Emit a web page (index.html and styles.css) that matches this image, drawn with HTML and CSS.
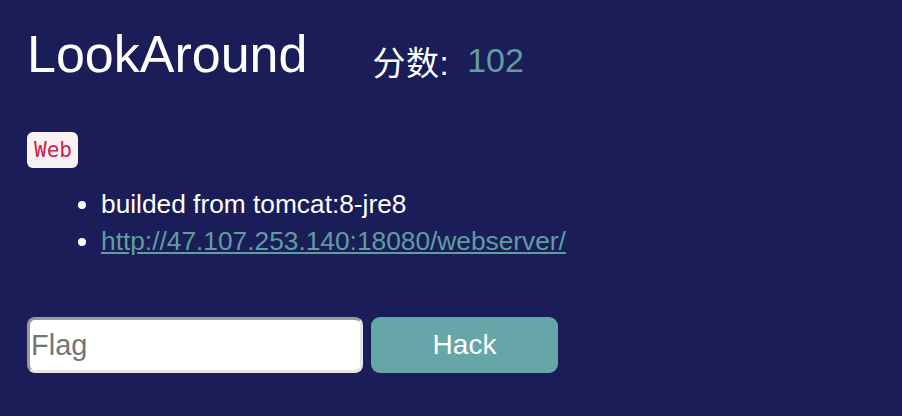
FILE: index.html
```html
<!DOCTYPE html>
<html>
<head>
<meta charset="utf-8">
<link rel="stylesheet" href="styles.css">
</head>
<body>
<div class="page">
  <div class="header">
    <h1 class="title">LookAround</h1>
    <div class="score"><span class="score-label">分数:</span><span class="score-value">102</span></div>
  </div>
  <div class="tags"><code class="tag">Web</code></div>
  <ul class="info">
    <li>builded from tomcat:8-jre8</li>
    <li><a href="#" class="link">http://47.107.253.140:18080/webserver/</a></li>
  </ul>
  <form class="flag-form">
    <input class="flag-input" type="text" placeholder="Flag">
    <button class="hack-btn" type="button">Hack</button>
  </form>
</div>
</body>
</html>
```

FILE: styles.css
```css
html, body {
  margin: 0;
  padding: 0;
  background: #1a1d57;
  height: 100%;
}
body {
  font-family: "Liberation Sans", Arial, "Noto Sans CJK SC", sans-serif;
  color: #ffffff;
}
.page {
  padding: 22px 27px 20px;
}
.header {
  display: flex;
  align-items: baseline;
  gap: 65px;
  height: 72px;
}
.title {
  margin: 0;
  font-weight: normal;
  font-size: 52px;
  line-height: 64px;
}
.score {
  font-size: 33px;
}
.score-label {
  font-family: "Liberation Sans", "Noto Sans CJK SC", sans-serif;
  font-size: 33px;
  letter-spacing: 0.5px;
  vertical-align: -3px;
  margin-right: 18px;
}
.score-value {
  color: #5f9ea0;
  font-size: 34px;
}
.tags {
  margin-top: 38px;
}
.tag {
  display: inline-block;
  font-family: "DejaVu Sans Mono", monospace;
  font-size: 21px;
  line-height: 24px;
  color: #c7254e;
  background: #f9f2f4;
  border-radius: 6px;
  padding: 6px 6px 6px 7px;
}
.info {
  margin: 18px 0 0 0;
  padding-left: 74px;
  font-size: 26.3px;
  line-height: 37px;
}
.link {
  color: #5f9ea0;
  text-decoration: underline;
}
.flag-form {
  display: flex;
  gap: 8px;
  margin-top: 57px;
}
.flag-input {
  box-sizing: border-box;
  width: 336px;
  height: 56px;
  border-style: solid;
  border-width: 3px;
  border-color: #9a9a9a #e6e6e6 #e6e6e6 #9a9a9a;
  border-radius: 8px;
  padding: 0 1px;
  font-family: "Liberation Sans", Arial, sans-serif;
  font-size: 29px;
  color: #333;
  background: #fff;
  outline: none;
}
.flag-input::placeholder {
  color: #757575;
}
.hack-btn {
  box-sizing: border-box;
  width: 187px;
  height: 56px;
  border: none;
  border-radius: 9px;
  background: #67a6a8;
  color: #ffffff;
  font-family: "Liberation Sans", Arial, sans-serif;
  font-size: 28px;
}
```
